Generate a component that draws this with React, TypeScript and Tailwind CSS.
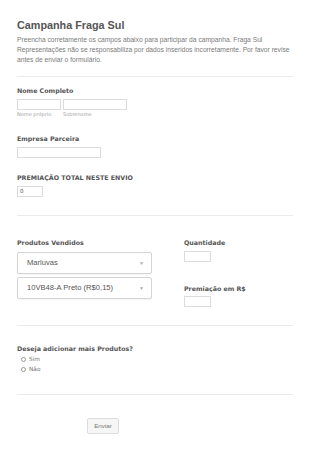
import React from 'react'

const label = "block font-['DejaVu_Sans',sans-serif] text-[6.3px] leading-[10px] font-bold text-[#555]"
const input = 'block h-[11px] border border-[#dcdcdc] bg-white'
const sub = "mt-px font-['DejaVu_Sans',sans-serif] text-[5px] leading-[6px] text-[#a0a0a0]"

function Divider({ className }: { className: string }) {
  return <div className={`h-px bg-[#ebebeb] ${className}`} />
}

function Select({ value, className }: { value: string; className: string }) {
  return (
    <div
      className={`flex h-[22px] w-[135px] items-center justify-between rounded-[2px] border border-[#d4d4d4] bg-white pl-[9px] pr-[7px] shadow-[0_1px_1px_rgba(0,0,0,0.04)] ${className}`}
    >
      <span className="font-['Liberation_Sans',Arial,sans-serif] text-[7.6px] text-[#555]">{value}</span>
      <span className="text-[5px] leading-none text-[#aaa]">▼</span>
    </div>
  )
}

function Radio({ text }: { text: string }) {
  return (
    <div className="flex h-[10px] items-center pl-[4px]">
      <span className="h-[5px] w-[5px] rounded-full border border-[#9a9a9a]" />
      <span className="ml-[3px] font-['DejaVu_Sans',sans-serif] text-[5.8px] text-[#777]">{text}</span>
    </div>
  )
}

export default function App() {
  return (
    <div className="h-[452px] w-[310px] overflow-hidden bg-white px-[17px] pt-[18px]">
      <h1 className="font-['Liberation_Sans',Arial,sans-serif] text-[10.8px] leading-[14px] font-bold text-[#555]">
        Campanha Fraga Sul
      </h1>
      <p className="mt-[3px] font-['Liberation_Sans',Arial,sans-serif] text-[6.7px] leading-[10px] text-[#7a7a7a]">
        Preencha corretamente os campos abaixo para participar da campanha. Fraga Sul
        <br />
        Representações não se responsabiliza por dados inseridos incorretamente. Por favor revise
        <br />
        antes de enviar o formulário.
      </p>

      <Divider className="mt-[11px] w-[276px]" />

      <label className={`${label} mt-[9px]`}>Nome Completo</label>
      <div className="mt-[3px] flex gap-[2px]">
        <div>
          <div className={`${input} w-[44px]`} />
          <div className={sub}>Nome próprio</div>
        </div>
        <div>
          <div className={`${input} w-[64px]`} />
          <div className={sub}>Sobrenome</div>
        </div>
      </div>

      <label className={`${label} mt-[17px]`}>Empresa Parceira</label>
      <div className={`${input} mt-[3px] w-[84px]`} />

      <label className={`${label} mt-[15px]`}>PREMIAÇÃO TOTAL NESTE ENVIO</label>
      <div className={`${input} mt-[3px] flex w-[26px] items-center pl-[2px]`}>
        <span className="font-['DejaVu_Sans',sans-serif] text-[5.6px] leading-none text-[#555]">0</span>
      </div>

      <Divider className="mt-[18px] w-[276px]" />

      <div className="mt-[22px] flex gap-[32px]">
        <div>
          <label className={label}>Produtos Vendidos</label>
          <Select value="Marluvas" className="mt-[4px]" />
          <Select value="10VB48-A Preto (R$0,15)" className="mt-[3px]" />
        </div>
        <div>
          <label className={label}>Quantidade</label>
          <div className={`${input} mt-[3px] w-[27px]`} />
          <label className={`${label} mt-[22px]`}>Premiação em R$</label>
          <div className={`${input} mt-[2px] w-[27px]`} />
        </div>
      </div>

      <Divider className="mt-[18px] w-[276px]" />

      <label className={`${label} mt-[18px]`}>Deseja adicionar mais Produtos?</label>
      <Radio text="Sim" />
      <Radio text="Não" />

      <Divider className="mt-[20px] w-[276px]" />

      <button className="mt-[23px] ml-[70px] flex h-[16px] w-[32px] items-center justify-center rounded-[2px] border border-[#dcdcdc] bg-[#f6f6f6] font-['Liberation_Sans',Arial,sans-serif] text-[6.2px] text-[#777]">
        Enviar
      </button>
    </div>
  )
}
